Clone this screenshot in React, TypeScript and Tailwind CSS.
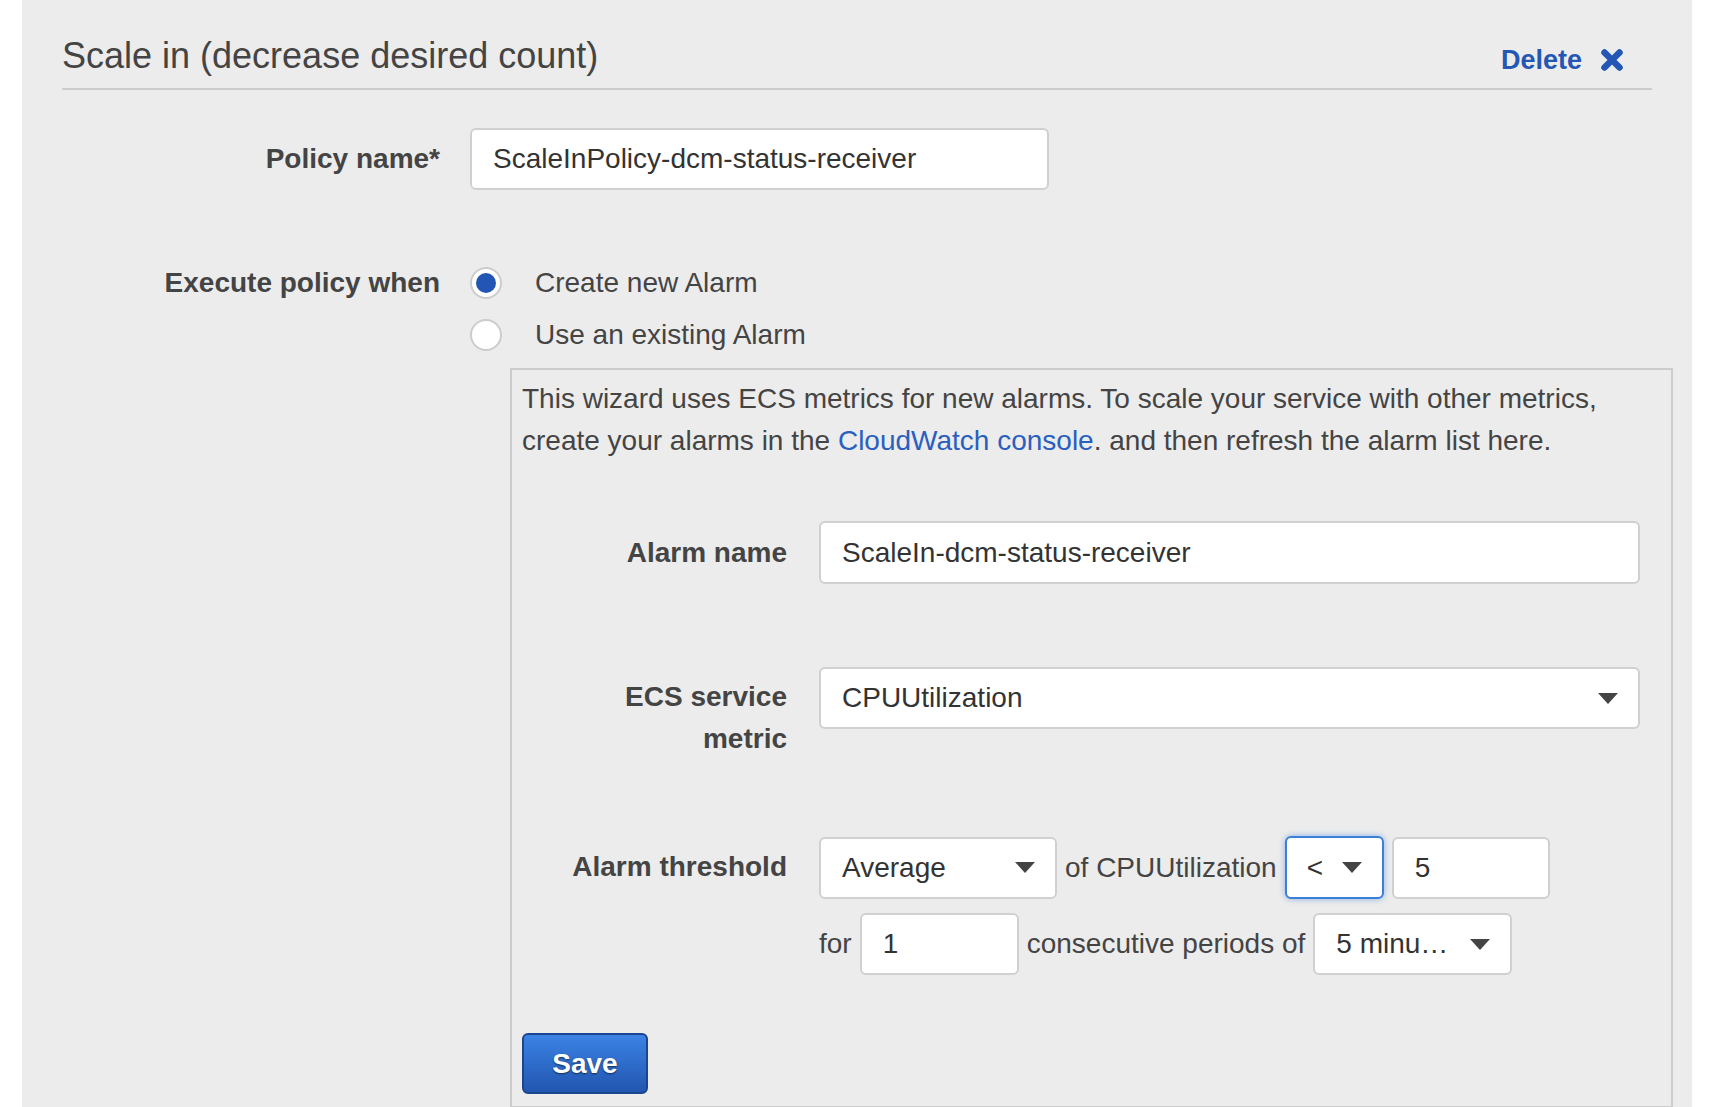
import React from "react";

function Caret() {
	return (
		<svg width="20" height="11" viewBox="0 0 20 11" className="flex-shrink-0">
			<path d="M0 0 H20 L10 11 Z" fill="#444" />
		</svg>
	);
}

function TextBox({ value, className }: { value: string; className: string }) {
	return (
		<div className={`flex items-center bg-white border-2 border-[#d0d0d0] rounded-[6px] pl-[21px] text-[#333] ${className}`}>
			{value}
		</div>
	);
}

function Select({ value, className }: { value: string; className: string }) {
	return (
		<div className={`flex items-center justify-between bg-white border-2 border-[#d0d0d0] rounded-[6px] pl-[21px] pr-[20px] text-[#333] ${className}`}>
			<span className="whitespace-nowrap">{value}</span>
			<Caret />
		</div>
	);
}

function Radio({ checked, label }: { checked?: boolean; label: string }) {
	return (
		<div className="flex items-center h-[42px]">
			<div className="w-[32px] h-[32px] rounded-full border-2 border-[#cccccc] bg-white flex items-center justify-center">
				{checked && <div className="w-[20px] h-[20px] rounded-full bg-[#2356b4]"></div>}
			</div>
			<span className="ml-[33px]">{label}</span>
		</div>
	);
}

export default function App() {
	return (
		<div className="min-h-screen bg-white font-['Liberation_Sans',Arial,sans-serif] text-[28px] leading-[42px] text-[#444]">
			<div className="ml-[22px] w-[1670px] bg-[#ececec] pl-[40px] pr-[19px] overflow-hidden">
				{/* Header */}
				<div className="mr-[21px] pt-[36px] pb-[12px] flex items-center justify-between border-b-2 border-[#cccccc]">
					<h1 className="text-[36px] leading-[40px] font-normal text-[#444]">Scale in (decrease desired count)</h1>
					<a className="flex items-center mr-[29px] mt-[8px] text-[27px] leading-[32px] font-bold text-[#2457b5]">
						Delete
						<svg width="22" height="22" viewBox="0 0 22 22" className="ml-[19px]">
							<path d="M3.5 3.5 L18.5 18.5 M18.5 3.5 L3.5 18.5" stroke="#2457b5" strokeWidth="6.5" strokeLinecap="round" />
						</svg>
					</a>
				</div>

				{/* Policy name */}
				<div className="mt-[38px] flex items-center">
					<label className="w-[378px] text-right font-bold">Policy name*</label>
					<TextBox value="ScaleInPolicy-dcm-status-receiver" className="ml-[30px] w-[579px] h-[62px]" />
				</div>

				{/* Execute policy when */}
				<div className="mt-[72px] flex items-start">
					<label className="w-[378px] text-right font-bold">Execute policy when</label>
					<div className="ml-[30px]">
						<Radio checked label="Create new Alarm" />
						<div className="mt-[10px]">
							<Radio label="Use an existing Alarm" />
						</div>
						<div className="mt-[12px] ml-[40px] w-[1163px] border-2 border-[#cccccc] pt-[8px] pb-[12px]">
							<p className="px-[10px]">
								This wizard uses ECS metrics for new alarms. To scale your service with other metrics, create your alarms in the{" "}
								<a className="text-[#2a5fc0]">CloudWatch console</a>. and then refresh the alarm list here.
							</p>

							<div className="mt-[59px] flex items-center">
								<label className="ml-[45px] w-[230px] text-right font-bold">Alarm name</label>
								<TextBox value="ScaleIn-dcm-status-receiver" className="ml-[32px] w-[821px] h-[63px]" />
							</div>

							<div className="mt-[83px] flex items-start">
								<label className="ml-[45px] w-[230px] pt-[9px] text-right font-bold">ECS service metric</label>
								<Select value="CPUUtilization" className="ml-[32px] w-[821px] h-[62px]" />
							</div>

							<div className="mt-[76px] flex items-start">
								<label className="ml-[45px] w-[230px] pt-[10px] text-right font-bold">Alarm threshold</label>
								<div className="ml-[32px]">
									<div className="flex items-center gap-[8px]">
										<Select value="Average" className="w-[238px] h-[62px]" />
										<span className="whitespace-nowrap">of CPUUtilization</span>
										<div className="flex items-center justify-between w-[99px] h-[63px] bg-white border-2 border-[#3b7fd9] rounded-[6px] pl-[20px] pr-[20px] shadow-[0_0_6px_rgba(59,127,217,0.55)] text-[#333]">
											<span>&lt;</span>
											<Caret />
										</div>
										<TextBox value="5" className="w-[158px] h-[62px]" />
									</div>
									<div className="mt-[14px] flex items-center gap-[8px]">
										<span>for</span>
										<TextBox value="1" className="w-[159px] h-[62px]" />
										<span className="whitespace-nowrap">consecutive periods of</span>
										<Select value="5 minu…" className="w-[199px] h-[62px]" />
									</div>
								</div>
							</div>

							<button className="mt-[58px] ml-[10px] w-[126px] h-[61px] rounded-[6px] border-2 border-[#1c4590] bg-gradient-to-b from-[#3b83e4] to-[#2256b0] text-white font-bold text-[28px] [text-shadow:0_1px_2px_rgba(0,0,0,0.6)]">
								Save
							</button>
						</div>
					</div>
				</div>
			</div>
		</div>
	);
}
